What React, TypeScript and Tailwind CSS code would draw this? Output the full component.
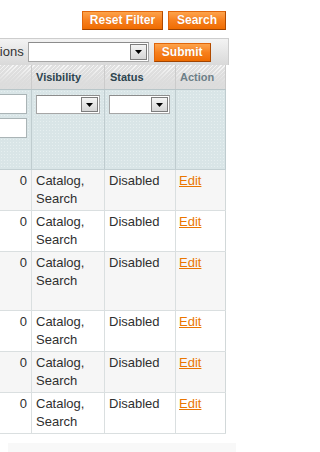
import React from "react";

function Btn({ w, children }: { w: string; children: React.ReactNode }) {
  return (
    <button
      className={`${w} h-[19px] flex items-center justify-center border border-[#e0650a] border-r-[#b04a00] border-b-[#a04300] bg-linear-to-b from-[#fda34a] via-[#f7801c] to-[#ef6c00] text-white font-bold text-[12px] leading-[15px] font-['Liberation_Sans',Arial,sans-serif] [text-shadow:0_0_1px_rgba(160,60,0,0.35)]`}
    >
      {children}
    </button>
  );
}

function Select({ w, h }: { w: string; h: string }) {
  return (
    <div className={`${w} ${h} bg-white border border-[#a6a6a6] border-t-[#8c8c8c] flex justify-end items-stretch p-px`}>
      <div className="w-[17px] border border-[#7d7d7d] bg-linear-to-b from-[#f4f4f4] to-[#d6d6d6] flex items-center justify-center">
        <svg width="7" height="4" viewBox="0 0 7 4">
          <path d="M0 0H7L3.5 4Z" fill="#000" />
        </svg>
      </div>
    </div>
  );
}

const rows = [
  { bg: "bg-[#f6f6f6]", h: "h-[41px]" },
  { bg: "bg-white", h: "h-[41px]" },
  { bg: "bg-[#f6f6f6]", h: "h-[59px]" },
  { bg: "bg-white", h: "h-[41px]" },
  { bg: "bg-[#f6f6f6]", h: "h-[41px]" },
  { bg: "bg-white", h: "h-[41px]" },
];

export default function App() {
  return (
    <div className="w-[236px] h-[452px] bg-white overflow-hidden font-['Liberation_Sans',Arial,sans-serif] text-[13px] leading-[18px] text-[#2f2f2f]">
      <div className="flex justify-end gap-[5px] pt-[11px] pr-[10px]">
        <Btn w="w-[81px]">Reset Filter</Btn>
        <Btn w="w-[58px]">Search</Btn>
      </div>

      <div className="mt-[8px] w-[229px] h-[27px] border-t border-r border-[#cdcdcd] bg-linear-to-b from-[#f3f3f3] to-[#d9d9d9] flex items-center">
        <span className="-ml-[19px] mr-[4px] whitespace-nowrap text-[#333]">Actions</span>
        <Select w="w-[121px]" h="h-[20px]" />
        <div className="ml-[5px]">
          <Btn w="w-[57px]">Submit</Btn>
        </div>
      </div>

      <div className="w-[226px]">
        <div className="grid grid-cols-[32px_73px_71px_50px] h-[25px] border-b border-[#b9c6c9] bg-[image:linear-gradient(to_bottom,rgba(235,235,235,0)_0%,rgba(220,220,220,0.95)_75%),repeating-linear-gradient(135deg,#f7f7f7_0px,#f7f7f7_1px,#e0e0e0_1px,#e0e0e0_3px)] text-[11px] font-bold">
          <div className="border-r border-[#cbcbcb]" />
          <div className="border-r border-[#cbcbcb] pl-[4px] flex items-center text-[#2d444f]">Visibility</div>
          <div className="border-r border-[#cbcbcb] pl-[5px] flex items-center text-[#2d444f]">Status</div>
          <div className="border-r border-[#cbcbcb] pl-[4px] flex items-center text-[#6d7f87]">Action</div>
        </div>

        <div className="grid grid-cols-[32px_73px_71px_50px] h-[80px] border-b border-[#c3d0d3] bg-[#d9e5e7] bg-[image:radial-gradient(circle,#e6eff0_0.7px,transparent_0.9px)] bg-[length:3px_3px]">
          <div className="border-r border-[#bfcccf] pr-[4px] pt-[4px] flex flex-col items-end gap-[4px]">
            <div className="w-[40px] h-[20px] bg-white border border-[#aab4b6]" />
            <div className="w-[40px] h-[20px] bg-white border border-[#aab4b6]" />
          </div>
          <div className="border-r border-[#bfcccf] pl-[4px] pt-[5px]">
            <Select w="w-[64px]" h="h-[19px]" />
          </div>
          <div className="border-r border-[#bfcccf] pl-[4px] pt-[5px]">
            <Select w="w-[61px]" h="h-[19px]" />
          </div>
          <div className="border-r border-[#bfcccf]" />
        </div>

        {rows.map((r, i) => (
          <div key={i} className={`grid grid-cols-[32px_73px_71px_50px] ${r.h} ${r.bg} border-b border-[#dadfe0]`}>
            <div className="border-r border-[#dadfe0] px-[4px] py-[2px] text-right">0</div>
            <div className="border-r border-[#dadfe0] px-[4px] py-[2px]">Catalog, Search</div>
            <div className="border-r border-[#dadfe0] px-[4px] py-[2px]">Disabled</div>
            <div className="border-r border-[#d2d8d9] px-[3px] py-[2px]">
              <a href="#" className="text-[#ea7601] underline">Edit</a>
            </div>
          </div>
        ))}
      </div>

      <div className="mt-[9px] ml-[8px] h-[10px] bg-[#f8f8f8]" />
    </div>
  );
}
